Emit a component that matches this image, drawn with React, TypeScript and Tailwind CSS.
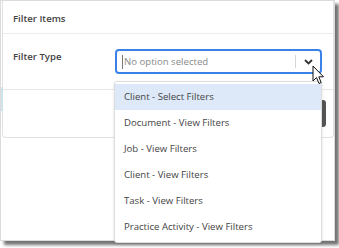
import React from "react"

const options = [
  "Client - Select Filters",
  "Document - View Filters",
  "Job - View Filters",
  "Client - View Filters",
  "Task - View Filters",
  "Practice Activity - View Filters",
]

const App: React.FC = () => {
  return (
    <div
      className="relative w-[339px] h-[248px] bg-white overflow-hidden"
      style={{ fontFamily: '"Open Sans", "Liberation Sans", sans-serif' }}
    >
      {/* screenshot frame */}
      <div className="relative w-[335px] h-[241px] bg-white border border-[#dcdcdc] shadow-[4px_4px_3px_rgba(0,0,0,0.55)]">
        {/* page behind the modal */}
        <div className="absolute left-0 top-[86px] w-[2px] h-[24px] bg-[#cfe3ea]" />

        {/* modal */}
        <div className="ml-[1px] w-[332px] border border-t-0 border-[#e2e2e2] rounded-b-[4px] bg-white">
          <div className="h-[33px] flex items-center px-[10px] pt-[4px] border-b border-[#ececec]">
            <span className="text-[9.6px] font-semibold text-[#444] leading-[14px]">
              Filter Items
            </span>
          </div>

          <div className="h-[56px] flex items-start pt-[15px] px-[10px] border-b border-[#e6e6e6]">
            <label className="w-[102px] text-[9.6px] font-semibold text-[#444] leading-[14px] mt-[1px]">
              Filter Type
            </label>
            <div className="w-[207px] h-[25px] border-2 border-[#3b82e8] rounded-[4px] flex items-center">
              <span className="w-px h-[14px] bg-[#777] ml-[5px]" />
              <span className="ml-px text-[9.6px] text-[#8a8a8a] leading-none flex-1">
                No option selected
              </span>
              <span className="w-px h-[13px] bg-[#d6d6d6]" />
              <div className="w-[24px] flex justify-center">
                <svg width="9" height="6" viewBox="0 0 9 6">
                  <path d="M1 1 L4.5 4.5 L8 1" fill="none" stroke="#333" strokeWidth="1.8" />
                </svg>
              </div>
            </div>
          </div>

          <div className="h-[47px] flex items-center justify-end pr-[7px]">
            <div className="w-[60px] h-[27px] rounded-[3px] bg-[#555]" />
          </div>
        </div>

        {/* dropdown menu */}
        <div className="absolute left-[113px] top-[80px] w-[208px] bg-white border border-[#dedede] rounded-[3px] shadow-[0_1px_3px_rgba(0,0,0,0.12)] py-[2px]">
          {options.map((o, i) => (
            <div
              key={o}
              className={
                "h-[26px] flex items-center pl-[9px] text-[9.6px] text-[#444] " +
                (i === 0 ? "bg-[#dde9f8]" : "")
              }
            >
              {o}
            </div>
          ))}
        </div>

        {/* mouse pointer */}
        <svg
          className="absolute left-[311px] top-[64px]"
          width="13"
          height="21"
          viewBox="0 0 13 21"
        >
          <path
            d="M1 1 L1 16 L4.5 12.5 L7 18.5 L9.2 17.5 L6.8 11.8 L11.5 11.8 Z"
            fill="#fff"
            stroke="#111"
            strokeWidth="1"
            strokeLinejoin="round"
          />
        </svg>
      </div>
    </div>
  )
}

export default App
